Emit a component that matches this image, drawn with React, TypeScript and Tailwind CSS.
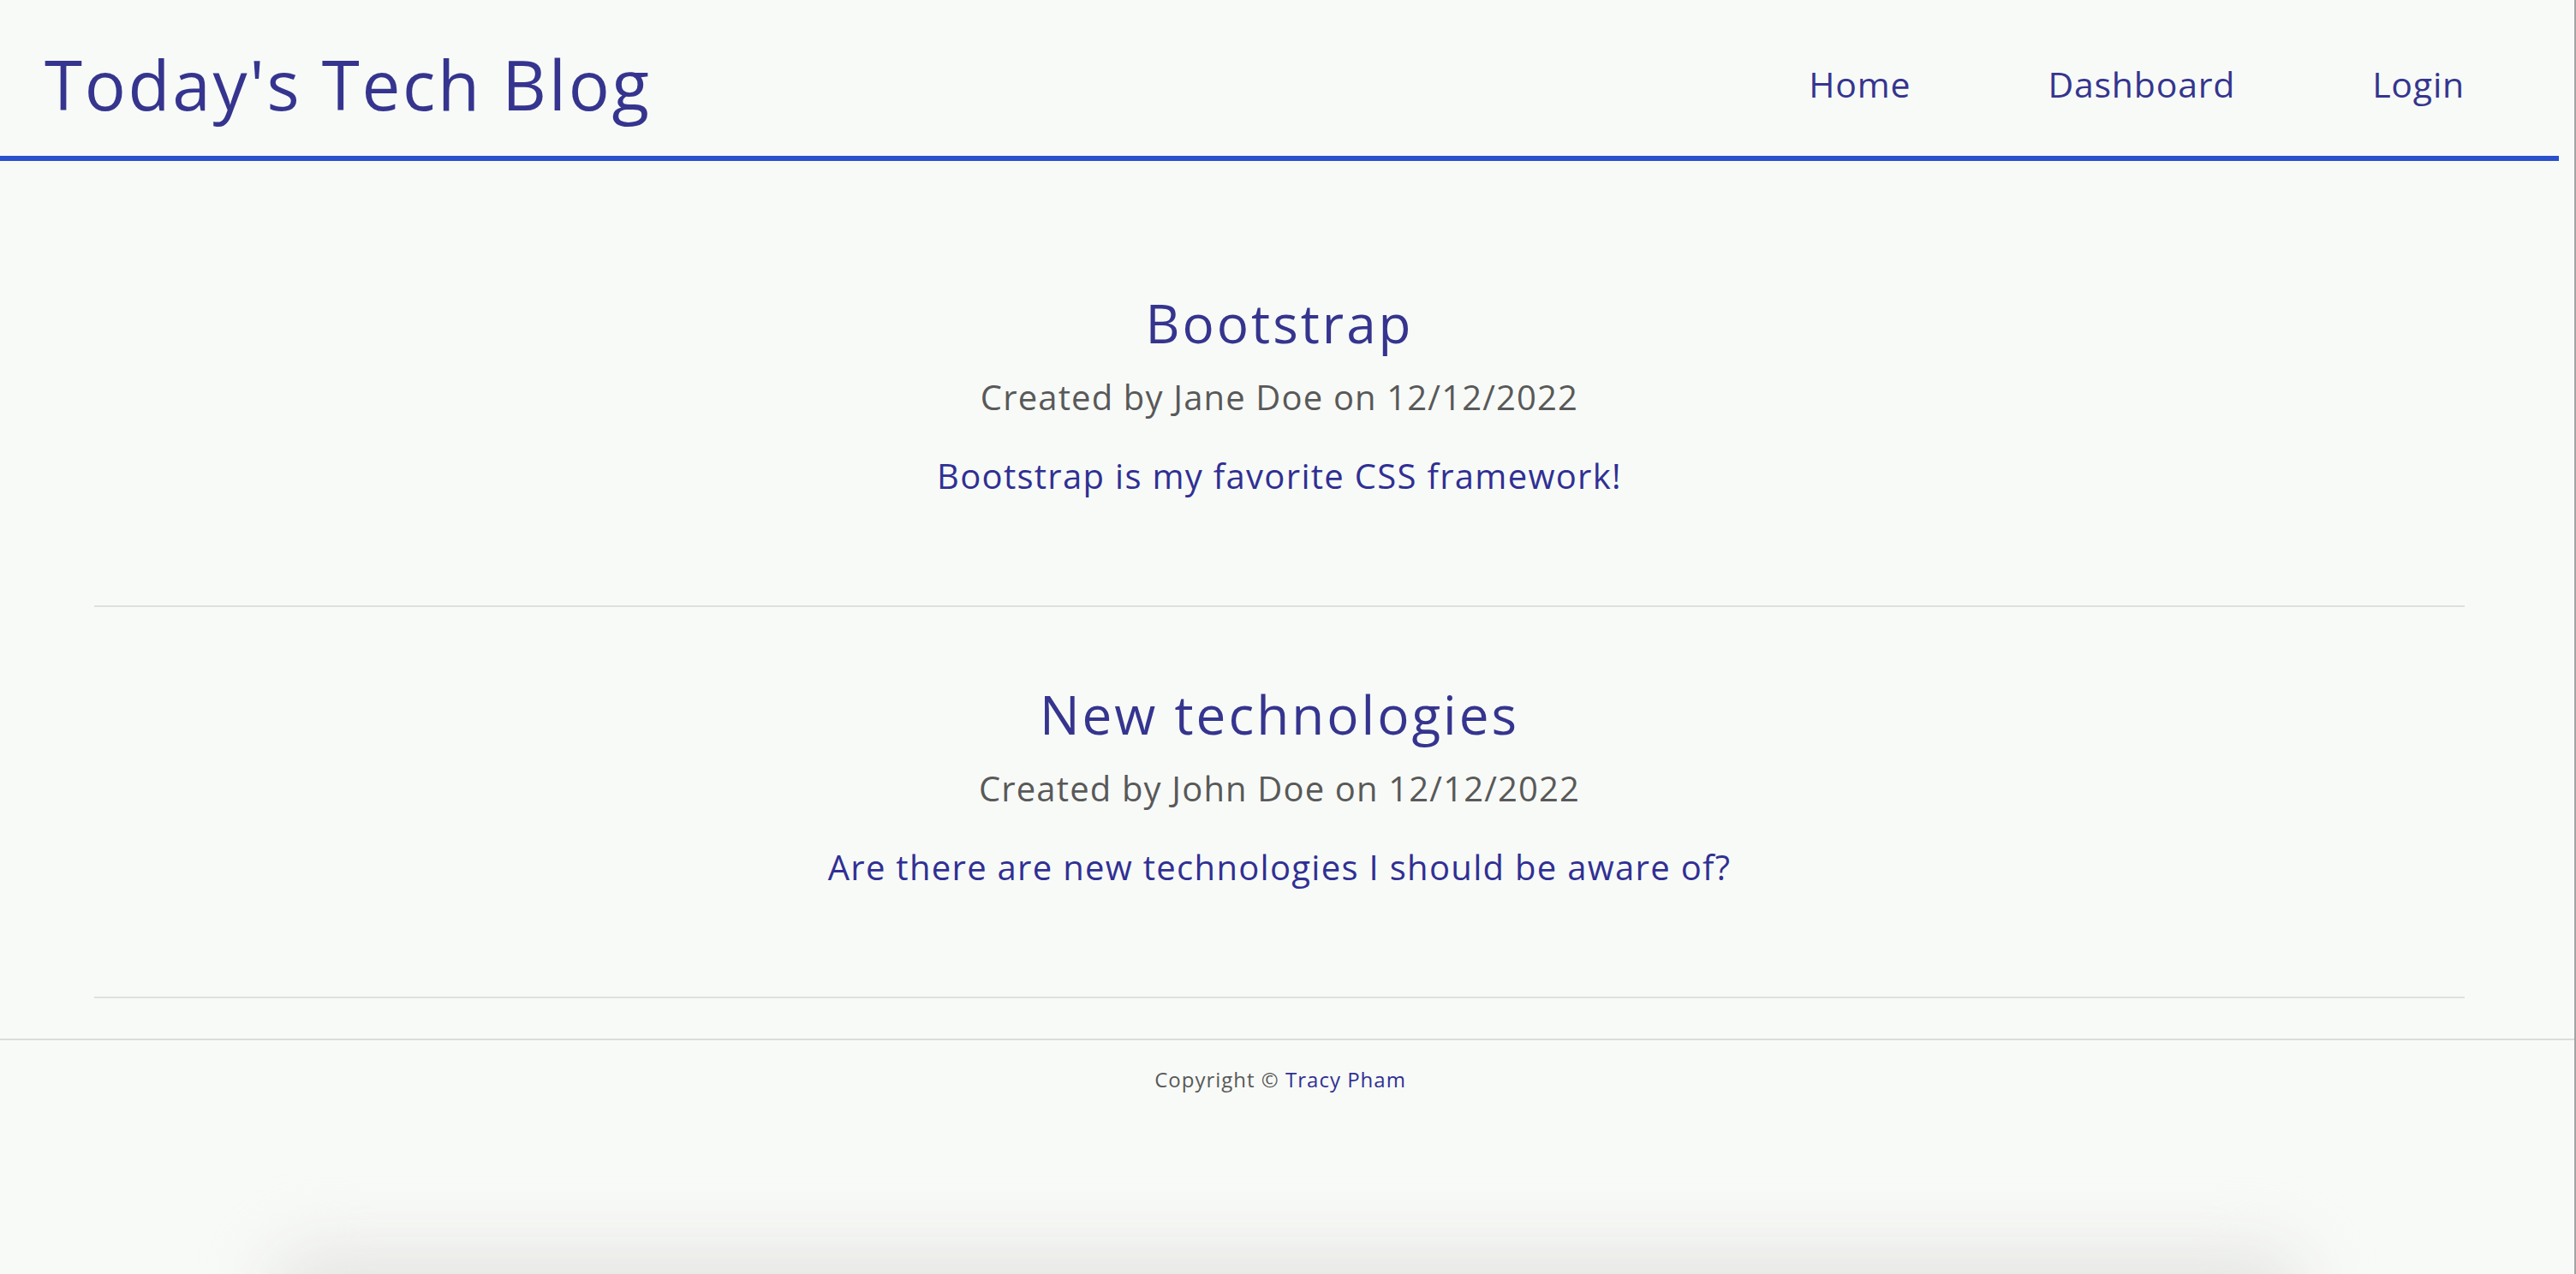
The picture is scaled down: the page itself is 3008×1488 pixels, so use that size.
import React from 'react';

const POSTS = [
  {
    title: 'Bootstrap',
    author: 'Jane Doe',
    date: '12/12/2022',
    body: 'Bootstrap is my favorite CSS framework!',
  },
  {
    title: 'New technologies',
    author: 'John Doe',
    date: '12/12/2022',
    body: 'Are there are new technologies I should be aware of?',
  },
];

function Header() {
  return (
    <header className="mr-[18px] h-[188px] flex items-center justify-between border-b-[6px] border-[#2a50cc] pl-[52px] pr-[110px] pt-[14px]">
      <h1 className="text-[80px] leading-none tracking-[2.7px] text-[#35358f]">Today's Tech Blog</h1>
      <nav className="flex items-center gap-[160px] text-[41px] tracking-[0.8px] text-[#35358f] leading-none">
        <a href="#">Home</a>
        <a href="#">Dashboard</a>
        <a href="#">Login</a>
      </nav>
    </header>
  );
}

function Post({ post }: { post: (typeof POSTS)[number] }) {
  return (
    <article className="border-b-2 border-[#dfe0de] pt-[94px] pb-[131px] text-center">
      <h2 className="text-[62px] leading-none tracking-[3px] text-[#35358f]">{post.title}</h2>
      <p className="mt-[36px] text-[40px] leading-none tracking-[1.15px] text-[#595959]">
        Created by {post.author} on {post.date}
      </p>
      <p className="mt-[52px] text-[40px] leading-none tracking-[1.3px] text-[#303094]">{post.body}</p>
    </article>
  );
}

export default function App() {
  return (
    <div
      className="relative h-[1488px] w-full overflow-hidden bg-[#f8faf7] border-r-2 border-[#a3a3a3]"
      style={{ fontFamily: '"Open Sans", "Liberation Sans", sans-serif' }}
    >
      <Header />
      <main className="ml-[110px] mr-[128px] pt-[64px]">
        {POSTS.map((p) => (
          <Post key={p.title} post={p} />
        ))}
      </main>
      <footer className="mt-[47px] border-t-2 border-[#dcdddb] pt-[28px] pr-[16px] text-center text-[24px] tracking-[1px] text-[#595959]">
        Copyright © <a href="#" className="text-[#303094]">Tracy Pham</a>
      </footer>
      {/* soft shadow peeking in at the bottom edge */}
      <div className="absolute left-[320px] right-[320px] top-[1462px] h-[120px] rounded-[40px] bg-[#e4e5e2] blur-2xl" />
    </div>
  );
}
